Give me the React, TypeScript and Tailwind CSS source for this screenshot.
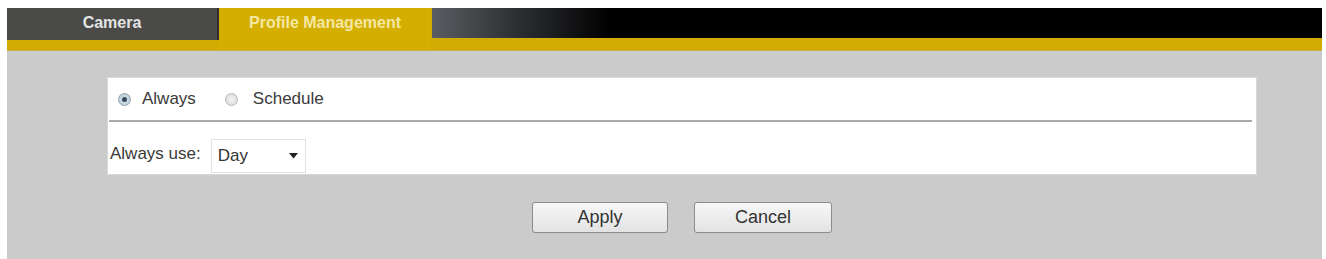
import React from "react";

function Radio({ checked }: { checked: boolean }) {
  return (
    <span
      className={
        checked
          ? "flex h-[13px] w-[13px] items-center justify-center rounded-full border border-[#8fa3b1] bg-[radial-gradient(circle,#dfe7ec_0%,#b3c3ce_100%)]"
          : "flex h-[13px] w-[13px] items-center justify-center rounded-full border border-[#b9b9b9] bg-[radial-gradient(circle,#f4f4f4_0%,#d6d6d6_100%)]"
      }
    >
      {checked && <span className="h-[5px] w-[5px] rounded-full bg-[#34495a]" />}
    </span>
  );
}

export default function App() {
  return (
    <div className="h-[259px] w-[1326px] bg-white pl-[7px] pr-[4px] pt-[8px] font-['Liberation_Sans',Arial,sans-serif] text-[#333]">
      {/* tab bar */}
      <div className="flex h-[42px] items-start bg-[#d1ab02]">
        <div className="flex h-[32px] w-[212px] justify-center border-r-2 border-[#2e2e2e] bg-[#4a4b49] pt-[3px] text-[16px] font-bold text-[#e4e4e4]">
          Camera
        </div>
        <div className="flex h-[42px] w-[212px] justify-center bg-[#d4ae00] pt-[3px] text-[16px] font-bold text-[#f3e7a4]">
          Profile Management
        </div>
        <div className="ml-[1px] h-[30px] flex-1 bg-[linear-gradient(to_right,#5a5d61_0%,#34363a_8%,#000_20%,#000_100%)]" />
      </div>
      <div className="h-[1px] bg-[#c4b34a]" />
      {/* content */}
      <div className="h-[208px] bg-[#cbcbcb] pl-[100px] pr-[65px] pt-[26px]">
        <div className="border border-[#d8d8d8] bg-white">
          <div className="flex h-[42px] items-center pl-[10px] text-[17px] text-[#3a3a3a]">
            <Radio checked />
            <span className="ml-[11px]">Always</span>
            <span className="ml-[29px]">
              <Radio checked={false} />
            </span>
            <span className="ml-[15px]">Schedule</span>
          </div>
          <div className="mx-[1px] mr-[4px] h-[2px] bg-[#a9a9a9]" />
          <div className="flex h-[52px] items-end pb-[1px] text-[17px] text-[#3a3a3a]">
            <span className="mb-[7px] ml-[2px]">Always use:</span>
            <div className="ml-[10px] flex h-[34px] w-[95px] items-center justify-between border border-[#e2e2e2] bg-white pl-[6px] pr-[7px]">
              <span className="text-[17px] text-[#333]">Day</span>
              <svg width="9" height="6" viewBox="0 0 9 6">
                <path d="M0 0 L9 0 L4.5 5.5 Z" fill="#222" />
              </svg>
            </div>
          </div>
        </div>
        <div className="mt-[27px] flex justify-center gap-[26px]">
          <button className="h-[31px] w-[136px] rounded-[3px] border border-[#8c8c8c] bg-[linear-gradient(to_bottom,#f7f7f7,#e3e3e3)] text-[18px] text-[#333]">
            Apply
          </button>
          <button className="h-[31px] w-[138px] rounded-[3px] border border-[#8c8c8c] bg-[linear-gradient(to_bottom,#f7f7f7,#e3e3e3)] text-[18px] text-[#333]">
            Cancel
          </button>
        </div>
      </div>
    </div>
  );
}
